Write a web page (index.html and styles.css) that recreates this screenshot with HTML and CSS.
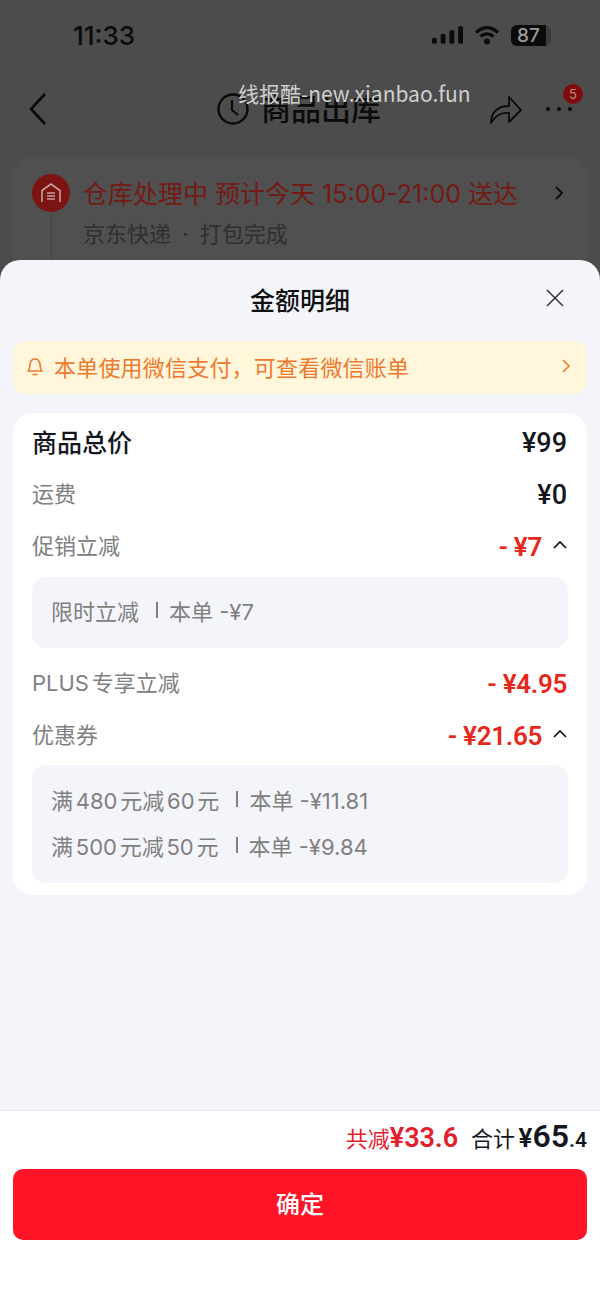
FILE: index.html
```html
<!DOCTYPE html>
<html lang="zh">
<head>
<meta charset="utf-8">
<title>金额明细</title>
<link rel="stylesheet" href="styles.css">
</head>
<body>
<div class="page">
  <div class="status">
    <span class="time">11:33</span>
    <div class="status-icons">
      <svg class="signal" width="31" height="20" viewBox="0 0 32 20"><rect x="0" y="13" width="5" height="6" rx="1.5"/><rect x="9" y="9" width="5" height="10" rx="1.5"/><rect x="18" y="5" width="5" height="14" rx="1.5"/><rect x="27" y="1" width="5" height="18" rx="1.5"/></svg>
      <svg class="wifi" width="26" height="20" viewBox="0 0 26 20"><path d="M2 7.500C9 1 17 1 24 7.500" fill="none" stroke="#0b0b0b" stroke-width="3.400"/><path d="M6.500 11.500C10.500 8 15.500 8 19.500 11.500" fill="none" stroke="#0b0b0b" stroke-width="3.400"/><circle cx="13" cy="16.500" r="3"/></svg>
      <div class="battery"><span class="battery-fill">87</span></div>
    </div>
  </div>
  <div class="nav">
    <svg class="back" width="22" height="34" viewBox="0 0 22 34"><path d="M17 2 3 17l14 15" fill="none" stroke="#0a0a0a" stroke-width="2.600"/></svg>
    <div class="nav-title">
      <svg width="34" height="34" viewBox="0 0 34 34"><circle cx="17" cy="17" r="14.500" fill="none" stroke="#0a0a0a" stroke-width="2.400"/><path d="M16 8v10l6 5" fill="none" stroke="#0a0a0a" stroke-width="2.200"/></svg>
      <span>商品出库</span>
    </div>
    <div class="nav-actions">
      <svg width="34" height="32" viewBox="0 0 34 32"><path d="M2 30C2 20 8 13 20 13V4l12 13-12 12v-9C12 19 6 23 2 30Z" fill="none" stroke="#0a0a0a" stroke-width="1.800" stroke-linejoin="round"/></svg>
      <div class="more"><i></i><i></i><i></i><b class="badge">5</b></div>
    </div>
  </div>
  <div class="watermark">线报酷-new.xianbao.fun</div>
  <div class="track">
    <div class="track-side">
      <div class="track-icon">
        <svg width="24" height="24" viewBox="0 0 24 24"><path d="M3 21V9.500L12 3l9 6.500V21" fill="none" stroke="#c9a0a0" stroke-width="1.600"/><path d="M8 12h8M8 15h8M8 18h8" stroke="#c9a0a0" stroke-width="1.500"/></svg>
      </div>
      <i class="track-line"></i>
    </div>
    <div class="track-body">
      <div class="track-title">仓库处理中 预计今天 15:00-21:00 送达</div>
      <div class="track-sub">京东快递 · 打包完成</div>
    </div>
    <svg class="track-arrow" width="10" height="16" viewBox="0 0 10 16"><path d="M2 2l6 6-6 6" fill="none" stroke="#0a0a0a" stroke-width="1.800"/></svg>
  </div>

  <div class="sheet">
    <div class="sheet-head">
      <span>金额明细</span>
      <svg class="close" width="20" height="20" viewBox="0 0 20 20"><path d="M2 2l16 16M18 2 2 18" stroke="#333" stroke-width="1.500" fill="none"/></svg>
    </div>
    <div class="notice">
      <svg width="20" height="20" viewBox="0 0 20 20"><path d="M3 15c2-2 1.500-4 2-7 .5-3 2.500-5 5-5s4.500 2 5 5c.5 3 0 5 2 7H3Z" fill="none" stroke="#ee7a2e" stroke-width="1.600" stroke-linejoin="round"/><path d="M7.500 18.500h5" stroke="#ee7a2e" stroke-width="1.600"/></svg>
      <span class="notice-text">本单使用微信支付，可查看微信账单</span>
      <svg class="notice-arrow" width="10" height="16" viewBox="0 0 10 16"><path d="M2 2l6 6-6 6" fill="none" stroke="#ee7a2e" stroke-width="1.600"/></svg>
    </div>
    <div class="card">
      <div class="row row-total"><span class="total-label">商品总价</span><span class="price">¥99</span></div>
      <div class="row"><span class="label">运费</span><span class="price">¥0</span></div>
      <div class="row"><span class="label">促销立减</span><span class="value"><span class="price red">- ¥7</span><svg class="caret" width="14" height="8" viewBox="0 0 14 8"><path d="M1 7l6-6 6 6" fill="none" stroke="#111" stroke-width="1.700"/></svg></span></div>
      <div class="detail detail-one">
        <div class="detail-line">限时立减<i class="sep"></i>本单 -¥7</div>
      </div>
      <div class="row row-plus"><span class="label tight">PLUS 专享立减</span><span class="price red">- ¥4.95</span></div>
      <div class="row"><span class="label">优惠券</span><span class="value"><span class="price red">- ¥21.65</span><svg class="caret" width="14" height="8" viewBox="0 0 14 8"><path d="M1 7l6-6 6 6" fill="none" stroke="#111" stroke-width="1.700"/></svg></span></div>
      <div class="detail detail-two">
        <div class="detail-line"><span class="tight">满 480 元减 60 元</span><i class="sep"></i>本单 -¥11.81</div>
        <div class="detail-line"><span class="tight">满 500 元减 50 元</span><i class="sep"></i>本单 -¥9.84</div>
      </div>
    </div>
    <div class="footer">
      <div class="summary">
        <span class="saved">共减<b>¥33.6</b></span>
        <span class="sum">合计 <b class="yen">¥</b><b class="big">65</b><b class="small">.4</b></span>
      </div>
      <div class="confirm">确定</div>
    </div>
  </div>
</div>
</body>
</html>
```

FILE: styles.css
```css
* { box-sizing: border-box; }
html, body { margin: 0; padding: 0; }
body { font-family: Inter, "Noto Sans CJK SC", sans-serif; }
.page { position: relative; width: 600px; height: 1298px; overflow: hidden; background: #4c4c4c; color: #0b0b0b; }

.status { display: flex; justify-content: space-between; align-items: center; height: 70px; padding: 0 49px 0 73px; }
.time { font-size: 26px; font-weight: 500; color: #0b0b0b; }
.status-icons { display: flex; align-items: center; gap: 11px; }
.signal, .wifi { fill: #0b0b0b; display: block; }
.battery { width: 40px; height: 21px; background: #3c3c3c; border-radius: 6px; overflow: hidden; }
.battery-fill { display: block; width: 35px; height: 21px; background: #0b0b0b; color: #9a9a9a; font-size: 19px; font-weight: 500; line-height: 21px; text-align: center; }

.nav { position: relative; display: flex; justify-content: space-between; align-items: center; height: 78px; padding: 0 28px; }
.nav-title { position: absolute; left: 216px; top: 21px; display: flex; align-items: center; gap: 11px; font-size: 30px; font-weight: 500; line-height: 36px; }
.nav-actions { display: flex; align-items: center; gap: 23px; }
.more { position: relative; display: flex; gap: 7px; }
.more i { width: 4px; height: 4px; border-radius: 50%; background: #0b0b0b; }
.badge { position: absolute; left: 17px; top: -23px; width: 20px; height: 20px; border-radius: 50%; background: #7e0c0c; color: #b88; font-size: 13px; font-weight: 400; line-height: 20px; text-align: center; }
.watermark { position: absolute; left: 238px; top: 79px; font-family: "Noto Sans CJK SC", sans-serif; font-size: 21px; line-height: 28px; color: #cfcfcf; white-space: nowrap; }

.track { display: flex; align-items: flex-start; margin: 10px 12px 0; padding: 16px 24px 0 20px; height: 120px; background: #505050; border-radius: 18px; }
.track-side { display: flex; flex-direction: column; align-items: center; flex: none; }
.track-icon { display: flex; align-items: center; justify-content: center; width: 38px; height: 38px; border-radius: 50%; background: #7d1414; }
.track-line { width: 1px; height: 60px; background: #434343; }
.track-body { flex: 1; margin-left: 13px; padding-top: 2px; }
.track-title { font-size: 25px; line-height: 36px; color: #741a14; white-space: nowrap; }
.track-sub { font-size: 22px; line-height: 30px; margin-top: 7px; color: #2f2f2f; word-spacing: 5px; }
.track-arrow { margin-top: 11px; }

.sheet { position: absolute; left: 0; right: 0; top: 260px; bottom: 0; display: flex; flex-direction: column; background: #f4f5fa; border-radius: 20px 20px 0 0; }
.sheet-head { position: relative; display: flex; justify-content: center; align-items: center; height: 81px; padding-bottom: 4px; font-size: 25px; font-weight: 500; color: #111; }
.close { position: absolute; left: 545px; top: 28px; }
.notice { display: flex; align-items: center; height: 53px; margin: 0 13px; padding: 0 16px 3px 12px; border-radius: 12px; background: #fff6dc; color: #ee7a2e; font-size: 22px; letter-spacing: .2px; }
.notice-text { margin-left: 9px; flex: 1; }
.card { margin: 19px 13px 0; padding: 4px 20px 12px 19px; background: #fff; border-radius: 20px; }
.row { display: flex; justify-content: space-between; align-items: center; height: 52px; font-size: 22px; color: #15171f; }
.row-total { font-size: 25px; font-weight: 500; }
.total-label { padding-bottom: 4px; }
.row-plus { margin-top: 10px; }
.label { color: #808080; padding-bottom: 6px; }
.tight { word-spacing: -3.4px; }
.price { font-family: Roboto, sans-serif; font-size: 27px; font-weight: 500; color: #15171f; }
.red { color: #e8281c; font-size: 26px; font-weight: 600; letter-spacing: -.3px; }
.value { display: flex; align-items: center; gap: 11px; }
.caret { margin-top: -5px; }
.detail { background: #f4f5fa; border-radius: 14px; margin-right: -1px; padding: 0 20px 0 19px; font-size: 22px; color: #808080; }
.detail-one { height: 71px; margin-top: 4px; display: flex; align-items: center; }
.detail-two { height: 118px; margin-top: 3px; padding-top: 18px; display: flex; flex-direction: column; gap: 9px; }
.detail-line { display: flex; align-items: center; height: 37px; padding-bottom: 5px; white-space: pre; }
.sep { width: 2px; height: 16px; margin: 0 11px 0 17px; background: #808080; }

.footer { margin-top: auto; height: 188px; padding: 0 13px; background: #fff; border-top: 1px solid #e6e6e6; }
.summary { display: flex; justify-content: flex-end; align-items: baseline; gap: 13px; height: 58px; padding-top: 6px; color: #15171f; font-size: 22px; font-family: Roboto, "Noto Sans CJK SC", sans-serif; }
.saved { color: #e31e2d; }
.saved b { font-size: 27px; font-weight: 600; }
.sum { word-spacing: -2px; }
.yen { font-size: 26px; font-weight: 600; }
.big { font-size: 32px; font-weight: 600; }
.small { font-size: 21px; font-weight: 600; }
.confirm { height: 71px; border-radius: 10px; background: #ff1428; color: #fff; font-size: 24px; font-weight: 500; line-height: 71px; text-align: center; }
```
